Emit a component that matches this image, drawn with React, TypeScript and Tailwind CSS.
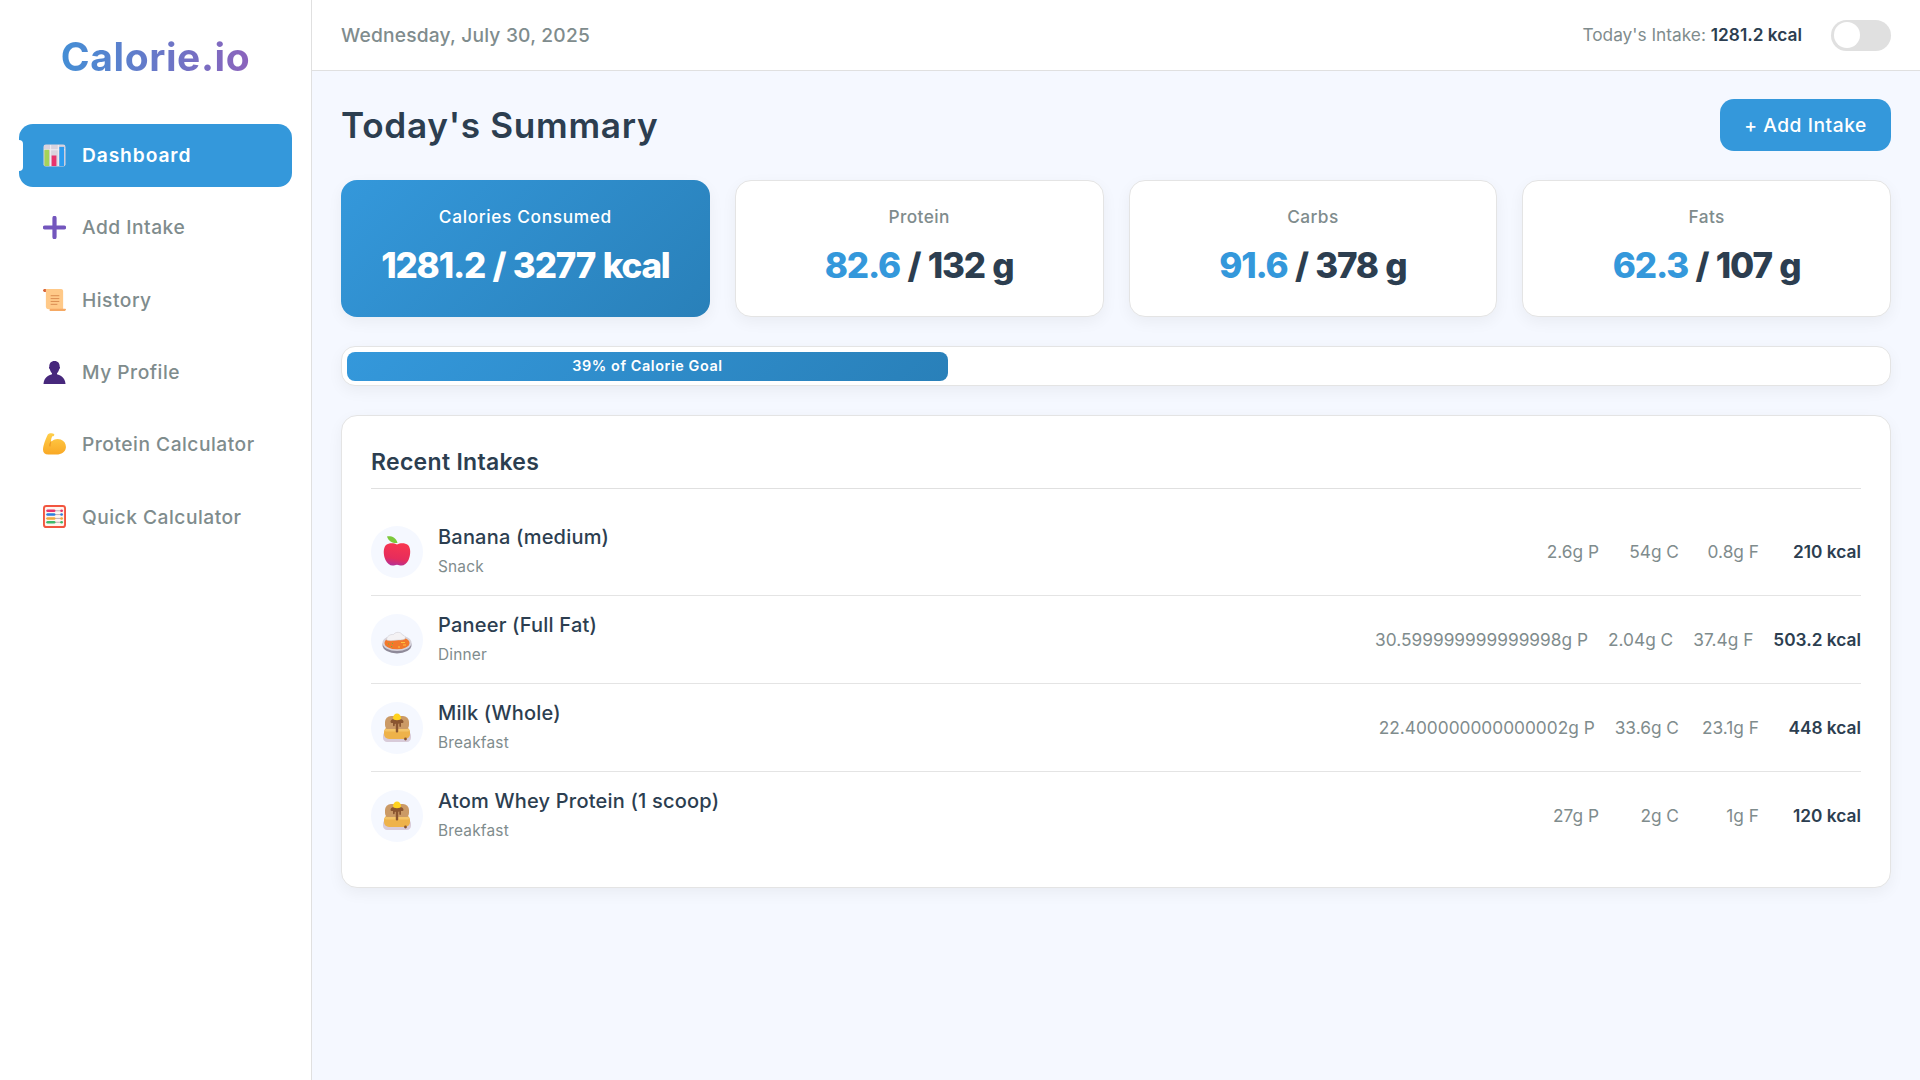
// Calorie.io dashboard: sidebar, top bar, summary cards, goal bar, recent intakes.

function ChartIcon() {
  return (
    <svg viewBox="0 0 24 24" className="h-[23px] w-[23px]">
      <rect x="0.5" y="0.5" width="23" height="23" rx="2.5" fill="#d9d3de" />
      <path d="M8 1v22M16 1v22M1 6h22" stroke="#f2eff4" strokeWidth="1" />
      <rect x="1.5" y="6" width="5" height="17" fill="#a5d35a" />
      <rect x="9" y="12" width="5" height="11" fill="#e8336d" />
      <rect x="17" y="3" width="5" height="20" fill="#2d9df0" />
    </svg>
  );
}

function PlusIcon() {
  return (
    <svg viewBox="0 0 24 24" className="h-[23px] w-[23px]">
      <path d="M12 2v20M2 12h20" stroke="#7356bd" strokeWidth="4.4" strokeLinecap="round" />
    </svg>
  );
}

function ScrollIcon() {
  return (
    <svg viewBox="0 0 24 24" className="h-[23px] w-[23px]">
      <path d="M0 1.500C0 .6 1 0 2 0h2v3H1z" fill="#d9663c" />
      <path d="M3 0h16c1 0 2 1 2 2v19H6c-2 0-3-1-3-3z" fill="#ffc988" />
      <path d="M7 23h16l1-1.500c0-.6-.5-.9-1-.9H7z" fill="#f5a964" />
      <path d="M8 7h9M8 10h9M8 13h9M8 16h7" stroke="#d98a4e" strokeWidth="1" />
    </svg>
  );
}

function PersonIcon() {
  return (
    <svg viewBox="0 0 24 24" className="h-[23px] w-[23px]">
      <path d="M12 0c3.600 0 5.600 2.500 5.400 6 .5.2.6 1.600-.4 2.400-.5 2-1.400 3.400-2.400 4.300v1.200c3.600 1 8.400 3 8.900 10.100H.5C1 17 5.800 15 9.400 13.900v-1.200c-1-.9-1.900-2.300-2.400-4.300-1-.8-.9-2.200-.4-2.400C6.400 2.500 8.400 0 12 0z" fill="#47287c" />
    </svg>
  );
}

function MuscleIcon() {
  return (
    <svg viewBox="0 0 24 24" className="h-[23px] w-[23px]">
      <defs>
        <linearGradient id="muscle" x1="0" y1="0" x2="0" y2="1">
          <stop offset="0" stopColor="#ffcf4a" />
          <stop offset="1" stopColor="#f9a825" />
        </linearGradient>
      </defs>
      <path d="M5 1.500C6 .2 10 -.2 11.500 1c.8 1-.2 2.500-1.800 2.500-.8 1.500-1.400 3.500-1.200 5.500 2-2 6-3.800 10-2.300 3.800 1.500 6 5 5.300 9-.6 4-4.500 6.800-9.800 6.800H5.500C2 22.500 0 20.500 0 17.500 0 13 3.200 5 5 1.500z" fill="url(#muscle)" />
      <path d="M8.500 9c-1 1.500-1.500 3-1.200 5" stroke="#e58a1f" strokeWidth="1" fill="none" />
    </svg>
  );
}

function AbacusIcon() {
  const rows = [
    { y: 6, fill: "#e8336d" },
    { y: 10, fill: "#2d7fe0" },
    { y: 14, fill: "#f2a93b" },
    { y: 18, fill: "#3fb96b" },
  ];
  return (
    <svg viewBox="0 0 24 24" className="h-[23px] w-[23px]">
      <rect x="1" y="1" width="22" height="22" rx="2.500" fill="#fff5ef" stroke="#f2553f" strokeWidth="2" />
      {rows.map((r) => (
        <g key={r.y}>
          <path d={`M3 ${r.y}h18`} stroke="#9a8f99" strokeWidth="0.7" />
          <rect x="3.500" y={r.y - 1.3} width="9.500" height="2.600" rx="1.300" fill={r.fill} />
          <rect x="18" y={r.y - 1.3} width="2.800" height="2.600" rx="1.300" fill={r.fill} />
        </g>
      ))}
    </svg>
  );
}

function AppleIcon() {
  return (
    <svg viewBox="0 0 32 32" className="h-8 w-8">
      <defs>
        <linearGradient id="apple" x1="0.6" y1="0" x2="0.4" y2="1">
          <stop offset="0" stopColor="#f8364f" />
          <stop offset="0.7" stopColor="#e62c5c" />
          <stop offset="1" stopColor="#b53095" />
        </linearGradient>
      </defs>
      <path d="M16 8.500c3-1.700 8-2 11 .5 3 3 2.800 10 .5 15-1.500 3.500-4.500 5.500-7 5.500-1.800 0-3-.8-4.500-.8s-2.700.8-4.500.8c-2.500 0-5.500-2-7-5.500C2.200 19 2 12 5 9c3-2.500 8-2.200 11-.5z" fill="url(#apple)" />
      <path d="M6 0.500c4-.8 9 .8 10.500 6.500C12 7.500 7.500 5.500 6 0.500z" fill="#7cc83c" />
    </svg>
  );
}

function CurryIcon() {
  return (
    <svg viewBox="0 0 32 32" className="h-8 w-8">
      <ellipse cx="16" cy="21" rx="14.500" ry="8.500" fill="#8f8a99" />
      <ellipse cx="16" cy="19" rx="14.500" ry="8" fill="#d6d2da" />
      <ellipse cx="16" cy="19" rx="12.500" ry="6.300" fill="#f2782b" />
      <path d="M5.500 16c0-3.500 3.500-6 7-5.500 2-3 7.500-3 9 .5 2.500 .3 3.500 2.500 2.500 4-3 1.500-6 .8-9 1.200-3 .4-6.500 1-9.500-.2z" fill="#f4f2f4" stroke="#c9c6cd" strokeWidth="0.5" />
      <path d="M7 20h1.200M10 22.500h1.200M11 19.500h1" stroke="#6fb53a" strokeWidth="1.100" />
      <path d="M20 18.500h4M22 21h3M17 23h2" stroke="#ffc23d" strokeWidth="1" />
    </svg>
  );
}

function PancakeIcon() {
  return (
    <svg viewBox="0 0 32 32" className="h-8 w-8">
      <path d="M2 24c0-2 1-4 3-4h22c2 0 3 2 3 4v2c0 2-2 4-4 4H6c-2 0-4-2-4-4z" fill="#d8cbd9" />
      <rect x="3" y="15" width="26" height="12" rx="5" fill="#eeb24a" />
      <rect x="4" y="4" width="24" height="15" rx="6" fill="#cb9a66" />
      <rect x="4" y="17" width="24" height="2.500" rx="1.250" fill="#f4c468" />
      <path d="M9.500 9.500C10 7 13 7 16 7s6 0 6.500 2.500c.2 1.300-1 1.800-2.500 1.500v3c0 1.200-1.700 1.200-1.700 0v-2.500c-.8 0-1.100.5-1.100 1.200v6.800c0 1.300-2.400 1.300-2.400 0v-7.500c-.7-.4-1.100 0-1.100.8v.8c0 1-1.700 1-1.700 0V11c-1.200.3-2.700-.4-2.500-1.500z" fill="#8a5530" />
      <path d="M12 6c0-2.500 2-4.500 4-4.500s4 2 4 4.500c0 1.700-1.800 2.200-4 2.200S12 7.700 12 6z" fill="#ffd21f" />
      <circle cx="24.500" cy="27" r="1.400" fill="#8a5530" />
    </svg>
  );
}

const NAV_ITEMS = [
  { label: "Dashboard", icon: <ChartIcon />, active: true },
  { label: "Add Intake", icon: <PlusIcon /> },
  { label: "History", icon: <ScrollIcon /> },
  { label: "My Profile", icon: <PersonIcon /> },
  { label: "Protein Calculator", icon: <MuscleIcon /> },
  { label: "Quick Calculator", icon: <AbacusIcon /> },
];

const MACROS = [
  { label: "Protein", value: "82.6", goal: "132 g" },
  { label: "Carbs", value: "91.6", goal: "378 g" },
  { label: "Fats", value: "62.3", goal: "107 g" },
];

const INTAKES = [
  { name: "Banana (medium)", meal: "Snack", icon: <AppleIcon />, p: "2.6g P", c: "54g C", f: "0.8g F", kcal: "210 kcal" },
  { name: "Paneer (Full Fat)", meal: "Dinner", icon: <CurryIcon />, p: "30.599999999999998g P", c: "2.04g C", f: "37.4g F", kcal: "503.2 kcal" },
  { name: "Milk (Whole)", meal: "Breakfast", icon: <PancakeIcon />, p: "22.400000000000002g P", c: "33.6g C", f: "23.1g F", kcal: "448 kcal" },
  { name: "Atom Whey Protein (1 scoop)", meal: "Breakfast", icon: <PancakeIcon />, p: "27g P", c: "2g C", f: "1g F", kcal: "120 kcal" },
];

export default function App() {
  return (
    <div className="flex min-h-screen bg-[#f5f8ff] text-[#2c3e50] [font-family:Inter,sans-serif]">
      <aside className="flex w-[312px] shrink-0 flex-col border-r border-[#e0e0e0] bg-white px-[19px]">
        <div className="mt-[31px] mb-[42px] bg-[linear-gradient(90deg,#3498db,#9b59b6)] bg-clip-text text-center text-[39px] leading-[51px] font-bold tracking-[0.6px] text-transparent">
          Calorie.io
        </div>
        <nav className="flex flex-col gap-[9.3px]">
          {NAV_ITEMS.map((item) => (
            <a
              key={item.label}
              className={
                item.active
                  ? "relative flex h-[63px] items-center gap-[16px] rounded-[14px] bg-[#3498db] pl-[24px] text-[19.2px] font-semibold tracking-[0.9px] text-white"
                  : "relative flex h-[63px] items-center gap-[16px] rounded-[14px] pl-[24px] text-[19.2px] font-medium tracking-[0.5px] text-[#7f8c8d]"
              }
            >
              {item.active && (
                <span className="absolute top-[16px] left-0 h-[31px] w-[4px] rounded-r-[4px] bg-white" />
              )}
              {item.icon}
              {item.label}
            </a>
          ))}
        </nav>
      </aside>

      <div className="flex min-w-0 flex-1 flex-col">
        <header className="flex h-[71px] items-center justify-between border-b border-[#e0e0e0] bg-white px-[29px]">
          <div className="text-[19.2px] font-medium tracking-[0.2px] text-[#7f8c8d]">Wednesday, July 30, 2025</div>
          <div className="flex items-center gap-[29px]">
            <div className="text-[17.3px] text-[#7f8c8d]">
              Today's Intake: <span className="font-semibold text-[#2c3e50]">1281.2 kcal</span>
            </div>
            <div className="flex h-[31px] w-[60px] items-center rounded-full bg-[#e0e0e0] pl-[3px]">
              <div className="h-[26px] w-[26px] rounded-full bg-white" />
            </div>
          </div>
        </header>

        <main className="flex flex-col gap-[29px] px-[29px] pt-[28px] pb-[29px]">
          <div className="flex h-[52px] items-center justify-between">
            <h1 className="text-[35.2px] font-semibold tracking-[0.7px]">Today's Summary</h1>
            <button className="h-[52px] w-[171px] rounded-[14px] bg-[#3498db] text-[19.2px] font-medium tracking-[0.55px] text-white">
              + Add Intake
            </button>
          </div>

          <div className="grid grid-cols-4 gap-[25px]">
            <div className="flex h-[137px] flex-col items-center rounded-[16px] bg-[linear-gradient(135deg,#3498db,#2980b9)] pt-[24px] text-white shadow-[0_5px_15px_rgba(0,0,0,0.05)]">
              <div className="text-[17.3px] leading-[26px] font-medium tracking-[0.65px]">Calories Consumed</div>
              <div className="mt-[9px] text-[35px] leading-[52px] font-extrabold tracking-[-1.2px] [word-spacing:1px]">1281.2 / 3277 kcal</div>
            </div>
            {MACROS.map((m) => (
              <div
                key={m.label}
                className="flex h-[137px] flex-col items-center rounded-[16px] border border-[#e4e4e4] bg-white pt-[23px] shadow-[0_5px_15px_rgba(0,0,0,0.05)]"
              >
                <div className="text-[17.3px] leading-[26px] font-medium tracking-[0.4px] text-[#7f8c8d]">{m.label}</div>
                <div className="mt-[9px] text-[35px] leading-[52px] font-extrabold tracking-[-1.2px] [word-spacing:1px]">
                  <span className="text-[#3498db]">{m.value}</span> / {m.goal}
                </div>
              </div>
            ))}
          </div>

          <div className="h-[40px] rounded-[14px] border border-[#e4e4e4] bg-white px-[5px] py-[4.5px] shadow-[0_5px_15px_rgba(0,0,0,0.05)]">
            <div className="flex h-full w-[601px] items-center justify-center rounded-[8px] bg-[linear-gradient(135deg,#3498db,#2980b9)] text-[14.4px] font-semibold tracking-[0.58px] text-white">
              39% of Calorie Goal
            </div>
          </div>

          <section className="rounded-[16px] border border-[#e4e4e4] bg-white px-[29px] pt-[28px] pb-[28px] shadow-[0_5px_15px_rgba(0,0,0,0.05)]">
            <h2 className="h-[44px] text-[23px] leading-[37px] font-semibold tracking-[0.3px]">Recent Intakes</h2>
            <div className="mb-[19px] border-b border-[#e0e0e0]" />
            {INTAKES.map((row) => (
              <div key={row.name} className="flex items-center border-b border-[#e4e4e4] py-[17.5px] last:border-b-0">
                <div className="flex h-[52px] w-[52px] shrink-0 items-center justify-center rounded-full bg-[#f5f8ff]">
                  {row.icon}
                </div>
                <div className="ml-[15px] flex h-[52px] flex-1 flex-col justify-center pb-[2px]">
                  <div className="text-[20px] leading-[30px] font-medium tracking-[0.2px]">{row.name}</div>
                  <div className="mt-[3px] text-[15.4px] leading-[24px] tracking-[0.2px] text-[#7f8c8d]">{row.meal}</div>
                </div>
                <div className="flex items-center gap-[20px] text-[17.3px] text-[#7f8c8d]">
                  <span className="min-w-[60px] text-right">{row.p}</span>
                  <span className="min-w-[60px] text-right">{row.c}</span>
                  <span className="min-w-[60px] text-right">{row.f}</span>
                  <span className="min-w-[82px] text-right font-semibold text-[#2c3e50]">{row.kcal}</span>
                </div>
              </div>
            ))}
          </section>
        </main>
      </div>
    </div>
  );
}
